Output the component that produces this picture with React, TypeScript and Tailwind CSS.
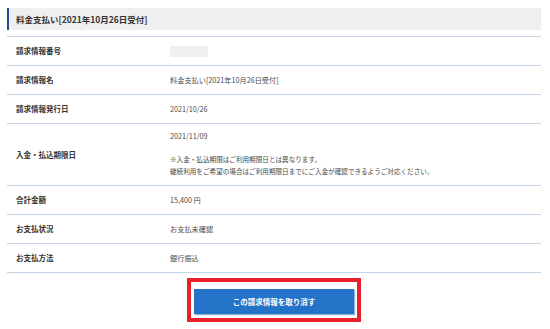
import React from "react";

interface Row {
  label: string;
  value: React.ReactNode;
  tall?: boolean;
}

const rows: Row[] = [
  {
    label: "請求情報番号",
    value: <div className="w-[38px] h-[11px] bg-[#efefef]" />,
  },
  { label: "請求情報名", value: "料金支払い[2021年10月26日受付]" },
  { label: "請求情報発行日", value: "2021/10/26" },
  {
    label: "入金・払込期限日",
    tall: true,
    value: (
      <div className="pt-[7px] pb-[7px]">
        <p className="leading-[10px]">2021/11/09</p>
        <div className="mt-[13px] text-[6.6px] leading-[11.6px]">
          <p>※入金・払込期限はご利用期限日とは異なります。</p>
          <p>継続利用をご希望の場合はご利用期限日までにご入金が確認できるようご対応ください。</p>
        </div>
      </div>
    ),
  },
  { label: "合計金額", value: "15,400 円" },
  { label: "お支払状況", value: "お支払未確認" },
  { label: "お支払方法", value: "銀行振込" },
];

export default function App() {
  return (
    <div
      className="w-[550px] h-[329px] bg-white pl-[7px] pt-[8px] text-[#333]"
      style={{ fontFamily: '"Noto Sans CJK JP", "Noto Sans", sans-serif' }}
    >
      <div className="w-[534px]">
        {/* Title bar */}
        <div className="h-[22px] flex items-center bg-[#efefef] border-l-2 border-[#1c4f91] pl-[7px] text-[8.5px] font-bold">
          料金支払い[2021年10月26日受付]
        </div>

        {/* Detail table */}
        <div className="mt-[6px] border-t border-[#c5d4e4]">
          {rows.map((row) => (
            <div
              key={row.label}
              className={`flex items-center border-b border-[#c5d4e4] ${
                row.tall ? "h-[62px]" : "h-[29px]"
              }`}
            >
              <div className="w-[163px] pl-[9px] text-[7.5px] font-bold">
                {row.label}
              </div>
              <div className="flex-1 text-[7.2px] text-[#4a4a4a]">{row.value}</div>
            </div>
          ))}
        </div>

        {/* Cancel button */}
        <div className="flex justify-center mt-[5px]">
          <div className="border-4 border-[#e8212b] px-[3px] py-[4px]">
            <button className="w-[160px] h-[25px] bg-[#2373c8] text-white text-[7.5px] font-bold shadow-[1px_1px_1px_#8fb3da]">
              この請求情報を取り消す
            </button>
          </div>
        </div>
      </div>
    </div>
  );
}
